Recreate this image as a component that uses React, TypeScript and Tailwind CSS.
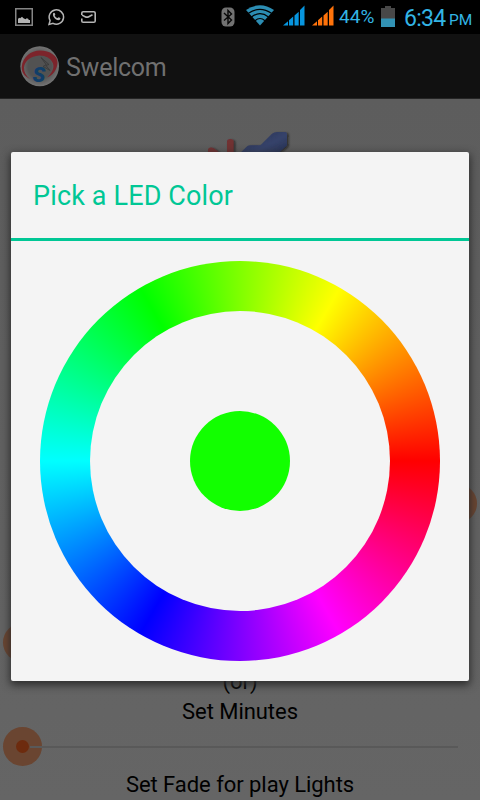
import React from "react";

function Signal({ color }: { color: string }) {
  return (
    <svg width="22" height="22" viewBox="0 0 22 22" fill={color}>
      <path d="M0 20.5 5 16.3V20.5Z M6 20.5V15.3L10.2 11.6V20.5Z M11.5 20.5V10.5L15.7 6.8V20.5Z M17 20.5V5L21.5 0.5V20.5Z" />
    </svg>
  );
}

function StatusBar() {
  return (
    <div className="flex h-[34px] shrink-0 items-center bg-black text-[#33b5e5]">
      <svg className="ml-[15px] shrink-0" width="18" height="18" viewBox="0 0 18 18" fill="none">
        <rect x="0.75" y="0.75" width="16.5" height="16.5" stroke="#858585" strokeWidth="1.5" />
        <path d="M3 15v-4l1-1.2 1.2.4L7 8.7l1.5 1.5 2 1 1.2-.9 1.5.5.6 1.2H15v3Z" fill="#b4b4b4" />
      </svg>
      <svg className="ml-[15px] shrink-0" width="17" height="18" viewBox="0 0 17 18" fill="none">
        <path d="M1 16.5 2.1 12.6A7.2 7.2 0 1 1 5 15.4Z" stroke="#b4b4b4" strokeWidth="1.5" />
        <path d="M5.1 5.3c.6-.8 1.4-.7 1.7 0l.5 1.2c.1.5-.6.9-.6 1.2.7 1.3 1.5 1.9 2.7 2.4.4 0 .8-1 1.3-.9l1.6.8c.5.9-.6 2.2-1.9 2.2-3.1-.3-6.2-3.5-5.3-6.9Z" fill="#b4b4b4" />
      </svg>
      <svg className="ml-4 shrink-0" width="15" height="12" viewBox="0 0 15 12" fill="none" stroke="#b4b4b4" strokeWidth="1.6">
        <path d="M.8 4V2.1Q.8.8 2.1.8h10.7q1.4 0 1.4 1.3v7.8q0 1.3-1.4 1.3H2.1Q.8 11.2.8 9.9V7.5M1 4.1l3.2 1.6q1.8.9 3.5 0l3.8-2" />
      </svg>
      <svg className="ml-[125px] shrink-0" width="14" height="20" viewBox="0 0 14 20" fill="none">
        <rect x="0.5" y="0.5" width="13" height="19" rx="4.5" fill="#727272" />
        <path d="m3 6 7.5 7L7 16.5v-13L10.5 7 3 13.5" stroke="#080808" strokeWidth="1.4" />
      </svg>
      <svg className="mb-[3px] ml-[11px] shrink-0" width="28" height="21" viewBox="0 0 28 21" fill="none">
        <path d="M0 5Q14-4.5 28 5L14 20.5Z" fill="#2c8db3" />
        <path d="M2.5 8.2Q14 .4 25.5 8.2M5.5 12Q14 5.4 22.5 12M9 15.7Q14 11.3 19 15.7" stroke="#000" strokeWidth="1.2" />
      </svg>
      <div className="mb-[3px] ml-[9px] shrink-0"><Signal color="#0795de" /></div>
      <div className="mb-[3px] ml-[7px] shrink-0"><Signal color="#ff730b" /></div>
      <span className="ml-[5px] mt-px w-[42px] shrink-0 text-[19px] tracking-[0.1px]">44%</span>
      <svg className="mb-[1px] shrink-0" width="14" height="21" viewBox="0 0 14 21">
        <path d="M0 2h4V0h6v2h4v19H0Z" fill="#484848" />
        <path d="M0 12.5h14V21H0Z" fill="#3292b4" />
      </svg>
      <span className="ml-[9px] mt-[5px] w-[45px] shrink-0 text-[23px] tracking-[-0.7px]">6:34</span>
      <span className="mt-[8px] text-[15.5px]">PM</span>
    </div>
  );
}

function ActionBar() {
  return (
    <div className="flex h-[65px] shrink-0 items-center border-b border-[#252525] bg-[#111]">
      <svg className="ml-5 shrink-0" width="40" height="42" viewBox="0 0 40 42">
        <defs>
          <radialGradient id="logo">
            <stop offset="60%" stopColor="#525252" />
            <stop offset="100%" stopColor="#747474" />
          </radialGradient>
        </defs>
        <ellipse cx="19.7" cy="21.3" rx="19.3" ry="20" fill="url(#logo)" />
        <path d="M10 34C4 31 1.5 27 1.7 22C2.5 12 11 5.5 20 5.5C30 5.5 38 11 37.5 18C37 25 33 30 27 32.5C32 28 34.5 23 33 18.5C31 13 25 10.2 19 10.5C11 11 4.5 16 4 22.5C3.8 27 6 31 10 34Z" fill="#7c242b" />
        <path d="m21 12.5 8 7-3 1 4 5-7-4 3-2Z" fill="#4c4c4c" stroke="#333" strokeWidth=".6" />
        <text x="12.5" y="36.5" fontFamily="Roboto, sans-serif" fontSize="21" fontWeight="900" fontStyle="italic" fill="#103e69">S</text>
      </svg>
      <h1 className="ml-[6px] mt-[4px] text-[25px] font-normal tracking-[-0.25px] text-[#707070]">Swelcom</h1>
    </div>
  );
}

function Thumb() {
  return (
    <div className="flex size-[39px] shrink-0 items-center justify-center rounded-full bg-[#6a4531]">
      <div className="size-[13px] rounded-full bg-[#6d2b0e]" />
    </div>
  );
}

function Slider({ end = false }: { end?: boolean }) {
  return (
    <div className={end ? "flex flex-row-reverse items-center pl-[22px] pr-[3px]" : "flex items-center pl-[3px] pr-[22px]"}>
      <Thumb />
      <div className={end ? "h-[2px] flex-1 bg-[#595959]" : "-ml-[12px] h-[2px] flex-1 bg-[#595959]"} />
    </div>
  );
}

function BackgroundScreen() {
  return (
    <main className="flex h-[701px] flex-col overflow-hidden bg-[linear-gradient(#5d5d5d,#656565)] text-[22px] text-black">
      <svg className="ml-[200px] mt-[30px] shrink-0" width="100" height="40" viewBox="0 0 100 40">
        <defs>
          <linearGradient id="bolt" x2="1" y2="1">
            <stop stopColor="#252e50" />
            <stop offset=".55" stopColor="#36436a" />
            <stop offset="1" stopColor="#202a4c" />
          </linearGradient>
          <filter id="softShadow" x="-20%" y="-20%" width="150%" height="150%">
            <feDropShadow dx="1.5" dy="1" stdDeviation="1" floodColor="#171717" floodOpacity=".7" />
          </filter>
        </defs>
        <g filter="url(#softShadow)">
          <path d="M8 29v-8q0-3 3.5-2.5 3 .5 7 4.500V29ZM27 29V12.500q0-2.500 3.300-2.500t3.300 2.500V29Z" fill="#713032" />
          <path d="M40 29v-5l7.500-7q1-.8 3-.8H60.500L72 4.800q2-1.800 5-1.800h8q2 0 2 2v11.500L73 29Z" fill="url(#bolt)" />
        </g>
      </svg>
      <div className="mt-[315px] shrink-0"><Slider end /></div>
      <div className="mt-[100px] shrink-0"><Slider /></div>
      <p className="mt-[5px] h-[30px] shrink-0 text-center leading-[30px]">(or)</p>
      <p className="h-[30px] shrink-0 text-center leading-[30px] tracking-[-0.05px]">Set Minutes</p>
      <div className="shrink-0"><Slider /></div>
      <p className="mt-[4px] shrink-0 text-center leading-[30px] tracking-[-0.05px]">Set Fade for play Lights</p>
    </main>
  );
}

function ColorDialog() {
  return (
    <section className="absolute left-[11px] top-[152px] flex h-[529px] w-[458px] flex-col overflow-hidden rounded-[2px] bg-[#f4f4f4] shadow-[0_3px_9px_1px_#2b2b2b]">
      <header className="flex h-[89px] shrink-0 items-center border-b-[3px] border-[#00c795] pl-[22px] pt-[2px] text-[27px] tracking-[0.14px] text-[#00c795]">
        Pick a LED Color
      </header>
      <div className="mx-auto mt-5 flex size-[400px] items-center justify-center rounded-full bg-[conic-gradient(from_90deg,#f00,#f0f,#00f,#0ff,#0f0,#ff0,#f00)]">
        <div className="flex size-[300px] items-center justify-center rounded-full bg-[#f4f4f4]">
          <div className="size-[100px] rounded-full bg-[#12ff00]" />
        </div>
      </div>
    </section>
  );
}

export default function App() {
  return (
    <div className="relative flex h-[800px] w-[480px] flex-col overflow-hidden bg-black font-[Roboto,sans-serif]">
      <StatusBar />
      <ActionBar />
      <BackgroundScreen />
      <ColorDialog />
    </div>
  );
}
